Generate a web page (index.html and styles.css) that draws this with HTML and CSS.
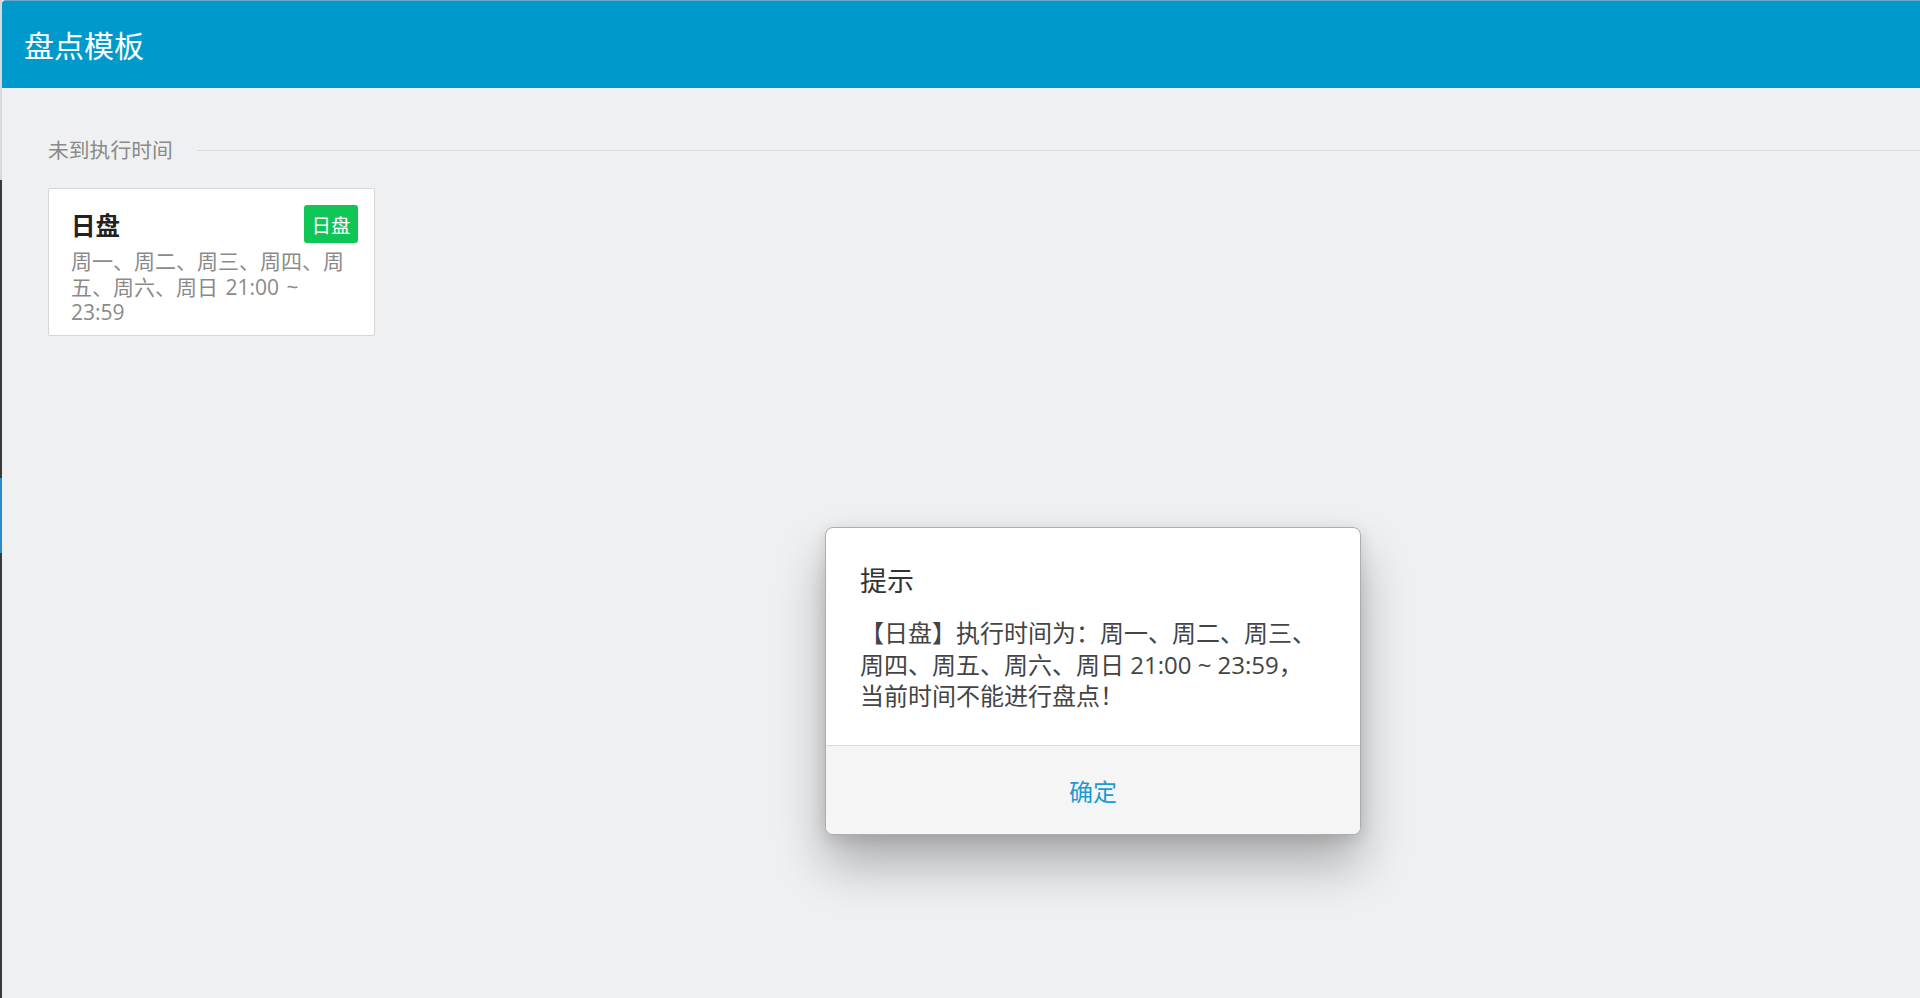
FILE: index.html
```html
<!DOCTYPE html>
<html lang="zh-CN">
<head>
<meta charset="utf-8">
<title>盘点模板</title>
<link rel="stylesheet" href="styles.css">
</head>
<body>
<div class="app">
  <div class="edge">
    <div class="edge-light"></div>
    <div class="edge-dark"></div>
    <div class="edge-blue"></div>
    <div class="edge-dark edge-fill"></div>
  </div>
  <div class="main">
    <header class="header"><h1 class="header-title">盘点模板</h1></header>
    <section class="section">
      <div class="section-head">
        <span class="section-label">未到执行时间</span>
        <span class="section-line"></span>
      </div>
      <div class="card">
        <div class="card-top">
          <span class="card-title">日盘</span>
          <span class="badge">日盘</span>
        </div>
        <p class="card-desc">周一、周二、周三、周四、周五、周六、周日 21:00 ~ 23:59</p>
      </div>
    </section>
  </div>
</div>
<div class="dialog">
  <div class="dialog-body">
    <div class="dialog-title">提示</div>
    <p class="dialog-msg">【日盘】执行时间为：周一、周二、周三、<br>周四、周五、周六、周日 21:00 ~ 23:59，<br>当前时间不能进行盘点！</p>
  </div>
  <div class="dialog-footer"><button class="dialog-btn" type="button">确定</button></div>
</div>
</body>
</html>
```
FILE: styles.css
```css
* { box-sizing: border-box; }
html, body { margin: 0; padding: 0; }
body {
  background: #eff0f2;
  font-family: "Open Sans", "Noto Sans CJK SC", sans-serif;
  height: 998px;
  overflow: hidden;
}
.app { display: flex; height: 100vh; }
.edge { width: 2px; display: flex; flex-direction: column; flex-shrink: 0; }
.edge-light { height: 180px; background: #d8d9db; }
.edge-dark { height: 298px; background: #3a3a3a; }
.edge-blue { height: 75px; background: #2a8ccf; }
.edge-fill { flex: 1; }
.main { flex: 1; display: flex; flex-direction: column; }
.header {
  height: 88px;
  background: #0099cc;
  border-top: 1px solid #6aa8c8;
  border-top-left-radius: 4px;
  display: flex;
  align-items: center;
  padding-left: 22px;
}
.header-title {
  margin: 0;
  color: #fff;
  font-size: 30px;
  font-weight: 400;
  line-height: 1;
  padding-top: 2px;
}
.section { padding: 48px 0 0 46px; }
.section-head { display: flex; align-items: center; height: 28px; }
.section-label { font-size: 20.8px; color: #8a8a8a; line-height: 28px; }
.section-line { flex: 1; height: 1px; background: #dcdde0; margin-left: 24px; }
.card {
  margin-top: 24px;
  width: 327px;
  height: 148px;
  background: #fff;
  border: 1px solid #d6d6d6;
  border-radius: 2px;
  padding: 16px 16px 0 22px;
}
.card-top { display: flex; justify-content: space-between; align-items: center; height: 38px; }
.card-title { font-size: 24.5px; font-weight: 700; color: #222; padding-top: 1px; }
.badge {
  background: #0fc555;
  color: #fff;
  font-size: 19.5px;
  border-radius: 3px;
  height: 38px;
  width: 54px;
  display: flex;
  align-items: center;
  justify-content: center;
}
.card-desc {
  margin: 6px 0 0;
  padding-right: 8px;
  font-size: 21px;
  line-height: 25.7px;
  color: #8a8a8a;
  word-spacing: 2px;
}
.dialog {
  position: absolute;
  left: 825px;
  top: 527px;
  width: 536px;
  height: 308px;
  background: #fff;
  border: 1px solid #adadad;
  border-radius: 8px;
  overflow: hidden;
  box-shadow: 0 30px 50px rgba(0, 0, 0, 0.28), 0 4px 16px rgba(0, 0, 0, 0.12);
  display: flex;
  flex-direction: column;
}
.dialog-body { flex: 1; padding: 37px 20px 0 34px; }
.dialog-title { font-size: 27px; line-height: 32px; color: #333; }
.dialog-msg {
  margin: 20px 0 0;
  font-size: 24px;
  line-height: 31.5px;
  color: #444;
  white-space: nowrap;
}
.dialog-footer {
  height: 89px;
  background: #f5f5f5;
  border-top: 1px solid #d9d9d9;
  display: flex;
  align-items: center;
  justify-content: center;
}
.dialog-btn {
  border: 0;
  background: transparent;
  color: #1b9bd1;
  font-family: inherit;
  font-size: 24px;
  padding: 0;
  cursor: pointer;
}
```
